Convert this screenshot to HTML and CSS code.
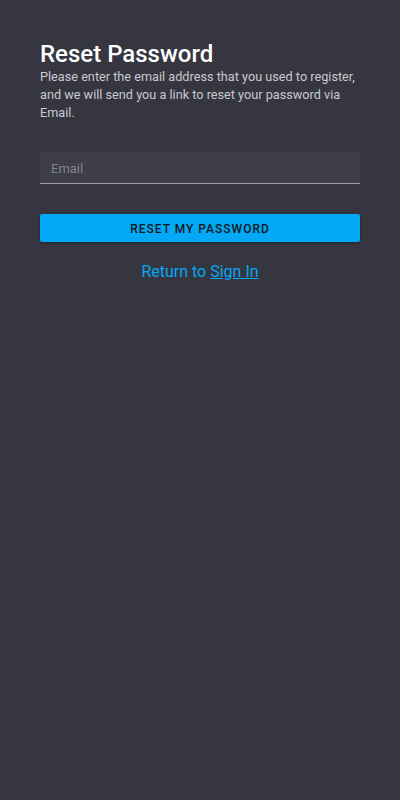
FILE: index.html
```html
<!DOCTYPE html>
<html lang="en">
<head>
<meta charset="utf-8">
<title>Reset Password</title>
<link rel="stylesheet" href="styles.css">
</head>
<body>
<main class="page">
  <h1 class="title">Reset Password</h1>
  <p class="desc">Please enter the email address that you used to register, and we will send you a link to reset your password via Email.</p>
  <form class="form">
    <div class="field">
      <input class="input" type="email" placeholder="Email">
    </div>
    <button class="btn" type="button">Reset my password</button>
  </form>
  <p class="back">Return to <a class="link" href="#">Sign In</a></p>
</main>
</body>
</html>
```
FILE: styles.css
```css
* { box-sizing: border-box; }
html, body {
  margin: 0;
  height: 100%;
  background: #363640;
}
body {
  font-family: Roboto, "Noto Sans", sans-serif;
  color: #fff;
}
.page {
  padding: 40px 40px 0;
  display: flex;
  flex-direction: column;
}
.title {
  margin: 0;
  font-size: 24px;
  font-weight: 500;
  line-height: 28px;
  color: #fff;
}
.desc {
  margin: 0;
  font-size: 12.7px;
  line-height: 18px;
  color: #c9c9cf;
}
.form {
  margin-top: 30px;
  display: flex;
  flex-direction: column;
}
.field {
  background: #3e3e48;
  border-radius: 3px 3px 0 0;
  border-bottom: 1px solid #9c9ca4;
  height: 32px;
}
.input {
  width: 100%;
  height: 31px;
  border: 0;
  background: transparent;
  padding: 2px 11px 0;
  font-family: inherit;
  font-size: 13px;
  color: #fff;
  outline: none;
}
.input::placeholder { color: #85858c; }
.btn {
  margin-top: 30px;
  height: 28px;
  border: 0;
  border-radius: 2px;
  background: #03a9f4;
  color: #14161c;
  font-family: inherit;
  font-size: 12px;
  font-weight: 500;
  letter-spacing: 1px;
  text-transform: uppercase;
  padding: 2px 0 0;
  box-shadow: 0 1px 3px rgba(0,0,0,0.35);
}
.back {
  margin: 20px 0 0;
  text-align: center;
  font-size: 16px;
  line-height: 20px;
  color: #03a9f4;
}
.link { color: #03a9f4; text-decoration: underline; }
```
